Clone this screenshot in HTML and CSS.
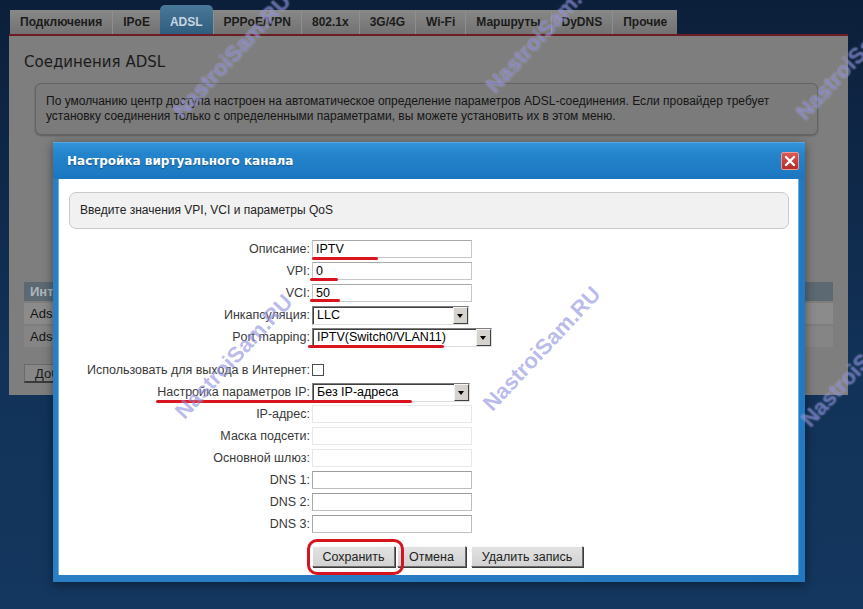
FILE: index.html
```html
<!DOCTYPE html>
<html lang="ru">
<head>
    <meta charset="UTF-8">
    <meta name="viewport" content="width=device-width, initial-scale=1.0">
    <title>Соединения ADSL</title>
    <link rel="stylesheet" href="styles.css">
</head>
<body>
    <div class="page">
        <ul class="tabs">
            <li>Подключения</li>
            <li>IPoE</li>
            <li class="active">ADSL</li>
            <li>PPPoE/VPN</li>
            <li>802.1x</li>
            <li>3G/4G</li>
            <li>Wi-Fi</li>
            <li>Маршруты</li>
            <li>DyDNS</li>
            <li>Прочие</li>
        </ul>
        <div class="panel">
            <h2>Соединения ADSL</h2>
            <div class="note">По умолчанию центр доступа настроен на автоматическое определение параметров ADSL-соединения. Если провайдер требует установку соединения только с определенными параметрами, вы можете установить их в этом меню.</div>
            <table class="conn">
                <tr><th>Интерфейс</th><th></th><th></th><th></th></tr>
                <tr><td>Adsl0</td><td></td><td></td><td></td></tr>
                <tr class="odd"><td>Adsl1</td><td></td><td></td><td></td></tr>
            </table>
            <button class="add">Добавить соединение</button>
        </div>
    </div>

    <div class="dialog">
        <div class="dlg-title">
            <span>Настройка виртуального канала</span>
            <span class="close">
                <svg width="12" height="12" viewBox="0 0 12 12"><path d="M2 2L10 10M10 2L2 10" stroke="#fff" stroke-width="2.4" stroke-linecap="round"/></svg>
            </span>
        </div>
        <div class="dlg-body">
            <div class="hint">Введите значения VPI, VCI и параметры QoS</div>
            <div class="form">
                <div class="row"><label>Описание:</label><input class="text" value="IPTV"></div>
                <div class="row"><label>VPI:</label><input class="text" value="0"></div>
                <div class="row"><label>VCI:</label><input class="text" value="50"></div>
                <div class="row"><label>Инкапсуляция:</label><div class="select"><span>LLC</span><i class="arrow"></i></div></div>
                <div class="row"><label>Port mapping:</label><div class="select wide"><span>IPTV(Switch0/VLAN11)</span><i class="arrow"></i></div></div>
                <div class="row gap"><label>Использовать для выхода в Интернет:</label><span class="check"></span></div>
                <div class="row"><label>Настройка параметров IP:</label><div class="select ip"><span>Без IP-адреса</span><i class="arrow"></i></div></div>
                <div class="row"><label>IP-адрес:</label><input class="text off" disabled></div>
                <div class="row"><label>Маска подсети:</label><input class="text off" disabled></div>
                <div class="row"><label>Основной шлюз:</label><input class="text off" disabled></div>
                <div class="row"><label>DNS 1:</label><input class="text dns"></div>
                <div class="row"><label>DNS 2:</label><input class="text dns"></div>
                <div class="row"><label>DNS 3:</label><input class="text dns"></div>
                <div class="row buttons">
                    <label></label>
                    <div class="btns">
                        <button class="btn save">Сохранить</button>
                        <button class="btn">Отмена</button>
                        <button class="btn del">Удалить запись</button>
                    </div>
                </div>
            </div>
        </div>
    </div>

    <!-- red marks drawn over the screenshot -->
    <div class="mark" style="left:312px;top:257px;width:66px"></div>
    <div class="mark" style="left:310px;top:278px;width:28px"></div>
    <div class="mark" style="left:310px;top:299px;width:30px"></div>
    <div class="mark" style="left:308px;top:345px;width:136px"></div>
    <div class="mark" style="left:156px;top:400px;width:256px"></div>
    <div class="ring"></div>

    <!-- watermarks -->
    <div class="wm" style="left:142px;top:43px">NastroiSam.RU</div>
    <div class="wm" style="left:455px;top:18px">NastroiSam.RU</div>
    <div class="wm" style="left:765px;top:45px">NastroiSam.RU</div>
    <div class="wm" style="left:144px;top:344px">NastroiSam.RU</div>
    <div class="wm" style="left:452px;top:336px">NastroiSam.RU</div>
    <div class="wm" style="left:770px;top:352px">NastroiSam.RU</div>
</body>
</html>
```

FILE: styles.css
```css
body {
    margin: 0;
    height: 609px;
    overflow: hidden;
    position: relative;
    font-family: "Liberation Sans", Arial, sans-serif;
    font-size: 12px;
    background: linear-gradient(#0c1f3a, #123258 60%, #14375f);
}
.page {
    padding: 5px 0 0 9px;
}
.tabs {
    list-style: none;
    margin: 0 0 0 1px;
    padding: 0;
    display: flex;
    align-items: flex-end;
    height: 29px;
}
.tabs li {
    height: 24px;
    line-height: 25px;
    padding: 0 10px;
    font-weight: bold;
    color: #1b1b1b;
    background: linear-gradient(#888, #727272);
    border-left: 1px solid #8e8e8e;
}
.tabs li:first-child {
    border-left: none;
}
.tabs li.active {
    height: 29px;
    line-height: 34px;
    color: #c9d6e0;
    background: linear-gradient(#4a7898, #2f5d7e);
    border-radius: 5px 5px 0 0;
    border-left: none;
}
.panel {
    width: 839px;
    height: 359px;
    background: #7e7e7e;
    border-top: 2px solid #6c1c22;
    overflow: hidden;
}
.panel h2 {
    margin: 18px 0 0 15px;
    font-family: "DejaVu Sans", Verdana, sans-serif;
    font-size: 15px;
    font-weight: normal;
    line-height: 17px;
    color: #1b1b1b;
}
.note {
    margin: 12px 0 0 26px;
    width: 761px;
    padding: 10px;
    line-height: 15px;
    color: #151515;
    background: #7b7b7b;
    border: 1px solid #636363;
    border-radius: 6px;
    box-shadow: 0 1px 2px rgba(0, 0, 0, 0.25);
}
.conn {
    margin: 147px 0 0 15px;
    width: 809px;
    border-collapse: collapse;
}
.conn th {
    height: 19px;
    padding: 0 6px;
    text-align: left;
    color: #aeb6bd;
    background: #5c6972;
    font-size: 13px;
}
.conn td {
    height: 21px;
    padding: 0 6px;
    font-size: 13px;
    color: #141414;
    background: #8b8b8b;
    border-top: 2px solid #7e7e7e;
}
.conn tr.odd td {
    background: #858585;
}
.add {
    margin: 17px 0 0 15px;
    height: 19px;
    padding: 0 10px;
    font-family: "Liberation Sans", Arial, sans-serif;
    font-size: 13px;
    color: #1a1a1a;
    background: #878787;
    border: 1px solid #6a6a6a;
    border-bottom: 2px solid #3a3a3a;
}

/* modal window */
.dialog {
    position: absolute;
    left: 53px;
    top: 142px;
    width: 752px;
    height: 440px;
    box-sizing: border-box;
    padding: 0 7px 7px 6px;
    background: linear-gradient(90deg, #2a7ec4, #2478bf);
    box-shadow: 0 2px 10px rgba(0, 0, 0, 0.45);
}
.dlg-title {
    height: 37px;
    margin: 0 -7px 0 -6px;
    padding: 0 6px 0 14px;
    display: flex;
    align-items: center;
    justify-content: space-between;
    background: linear-gradient(#3394da, #2484cc 30%, #1b76c0);
    border-top: 1px solid #55a8e4;
    box-sizing: border-box;
}
.dlg-title span:first-child {
    font-family: "DejaVu Sans", Verdana, sans-serif;
    font-size: 12px;
    font-weight: bold;
    color: #fff;
    text-shadow: 0 1px 1px rgba(0, 0, 0, 0.3);
}
.close {
    width: 18px;
    height: 18px;
    box-sizing: border-box;
    display: flex;
    align-items: center;
    justify-content: center;
    background: linear-gradient(#d95a55, #b42d29);
    border: 1px solid #eb9a96;
    border-radius: 2px;
}
.dlg-body {
    height: 396px;
    box-sizing: border-box;
    padding: 13px 9px 0 10px;
    background: #fff;
    box-shadow: -1px 0 0 #67b2e8, 1px 0 0 #67b2e8;
}
.hint {
    height: 37px;
    box-sizing: border-box;
    padding: 10px 10px;
    line-height: 15px;
    color: #222;
    background: #f1f1f1;
    border: 1px solid #c9c9c9;
    border-radius: 7px;
}
.form {
    margin-top: 9px;
}
.row {
    display: flex;
    align-items: center;
    height: 22px;
    gap: 2px;
}
.row.gap {
    margin-top: 11px;
}
.row label {
    width: 241px;
    flex: none;
    text-align: right;
    font-size: 12.5px;
    color: #383838;
}
.text {
    width: 160px;
    height: 18px;
    box-sizing: border-box;
    padding: 0 3px;
    font-family: "Liberation Sans", Arial, sans-serif;
    font-size: 12.5px;
    color: #000;
    background: #fff;
    border: 1px solid #c6c6c6;
    border-top-color: #a9a9a9;
    outline: none;
}
.text.off {
    border-color: #e8e8e8;
}
.text.dns {
    border-color: #bdbdbd;
    border-top-color: #9c9c9c;
    border-left-color: #a9a9a9;
}
.select {
    width: 157px;
    height: 19px;
    box-sizing: border-box;
    display: flex;
    align-items: center;
    justify-content: space-between;
    padding-left: 4px;
    font-size: 12.5px;
    background: #fff;
    border: 1px solid;
    border-color: #7f7f7f #dedede #dedede #7f7f7f;
    box-shadow: inset 1px 1px 0 #404040;
    color: #000;
}
.select.wide {
    width: 180px;
}
.select.ip {
    width: 158px;
}
.arrow {
    width: 15px;
    height: 17px;
    box-sizing: border-box;
    position: relative;
    background: #d6d3ce;
    border: 1px solid;
    border-color: #f4f4f4 #404040 #404040 #f4f4f4;
}
.arrow::after {
    content: "";
    position: absolute;
    left: 3px;
    top: 6px;
    border-left: 3.5px solid transparent;
    border-right: 3.5px solid transparent;
    border-top: 4px solid #000;
}
.check {
    width: 12px;
    height: 12px;
    box-sizing: border-box;
    background: #fff;
    border: 1px solid #4c4c4c;
}
.row.buttons {
    margin-top: 11px;
    height: 21px;
}
.btns {
    display: flex;
    gap: 2px;
}
.btn {
    height: 21px;
    padding: 0;
    font-family: "Liberation Sans", Arial, sans-serif;
    font-size: 12.5px;
    color: #222;
    background: linear-gradient(#e2e2e2, #d2d2d2);
    border: 1px solid;
    border-color: #fbfbfb #6e6e6e #6e6e6e #fbfbfb;
    box-shadow: 1px 1px 0 #3c3c3c;
    width: 69px;
}
.btn.save {
    width: 83px;
}
.btn.del {
    width: 112px;
    margin-left: 3px;
}

/* annotations */
.mark {
    position: absolute;
    height: 3px;
    background: #d9141f;
    border-radius: 2px;
}
.ring {
    position: absolute;
    left: 307px;
    top: 539px;
    width: 97px;
    height: 36px;
    box-sizing: border-box;
    border: 3px solid #d6141e;
    border-radius: 10px;
}
.wm {
    position: absolute;
    width: 180px;
    text-align: center;
    font-family: "Liberation Sans", Arial, sans-serif;
    font-size: 22px;
    font-weight: bold;
    line-height: 26px;
    color: rgba(100, 100, 210, 0.45);
    text-shadow: 0 0 2px rgba(255, 255, 255, 0.4);
    transform: rotate(-47deg);
    white-space: nowrap;
}
```
